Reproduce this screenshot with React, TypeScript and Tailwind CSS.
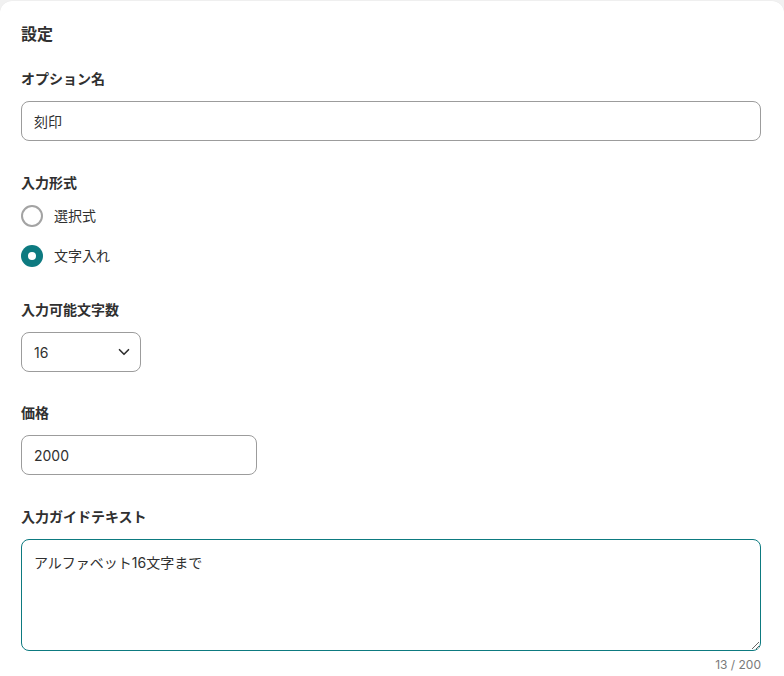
import React from "react";

const font = { fontFamily: 'Inter, "Noto Sans CJK JP", sans-serif' };

function Label({ children }: { children: React.ReactNode }) {
  return <div className="text-[14px] leading-5 font-semibold text-[#303030] mb-3">{children}</div>;
}

function Radio({ checked, label }: { checked: boolean; label: string }) {
  return (
    <div className="flex items-center gap-[11px] h-6">
      {checked ? (
        <span className="w-[22px] h-[22px] rounded-full bg-[#0d7a80] flex items-center justify-center">
          <span className="w-2 h-2 rounded-full bg-white" />
        </span>
      ) : (
        <span className="w-[22px] h-[22px] rounded-full border-2 border-[#a3a3a3] bg-white" />
      )}
      <span className="text-[14px] leading-5 text-[#303030]">{label}</span>
    </div>
  );
}

export default function App() {
  return (
    <div className="min-h-[676px] bg-[#f1f1f1] pt-px" style={font}>
      <div className="bg-white rounded-t-xl min-h-[675px] pl-[21px] pr-[23px] pt-[21px] pb-4 shadow-[0_0_1px_rgba(0,0,0,0.08)]">
        <h2 className="text-[16px] leading-6 font-bold text-[#303030] mb-[23px]">設定</h2>

        <Label>オプション名</Label>
        <div className="h-10 w-full rounded-lg border border-[#9c9c9c] flex items-center px-3 text-[14px] text-[#303030]">
          刻印
        </div>

        <div className="mt-8">
          <Label>入力形式</Label>
          <div className="flex flex-col gap-4 -mt-px">
            <Radio checked={false} label="選択式" />
            <Radio checked={true} label="文字入れ" />
          </div>
        </div>

        <div className="mt-8">
          <Label>入力可能文字数</Label>
          <div className="h-10 w-[120px] rounded-lg border border-[#9c9c9c] flex items-center justify-between pl-3 pr-[7px] text-[14px] text-[#303030]">
            <span>16</span>
            <svg width="18" height="18" viewBox="0 0 24 24" fill="none" stroke="#303030" strokeWidth="2.2" strokeLinecap="round" strokeLinejoin="round">
              <path d="M6 9l6 6 6-6" />
            </svg>
          </div>
        </div>

        <div className="mt-[31px]">
          <Label>価格</Label>
          <div className="h-10 w-[236px] rounded-lg border border-[#9c9c9c] flex items-center px-3 text-[14px] text-[#303030]">
            2000
          </div>
        </div>

        <div className="mt-8">
          <Label>入力ガイドテキスト</Label>
          <textarea
            readOnly
            defaultValue="アルファベット16文字まで"
            className="block w-full h-[112px] rounded-lg border border-[#0d7a80] px-3 py-[13px] text-[14px] leading-5 text-[#303030] outline-none"
            style={font}
          />
          <div className="mt-[6px] text-right text-[12px] leading-4 text-[#7a7a7a]">13 / 200</div>
        </div>
      </div>
    </div>
  );
}
